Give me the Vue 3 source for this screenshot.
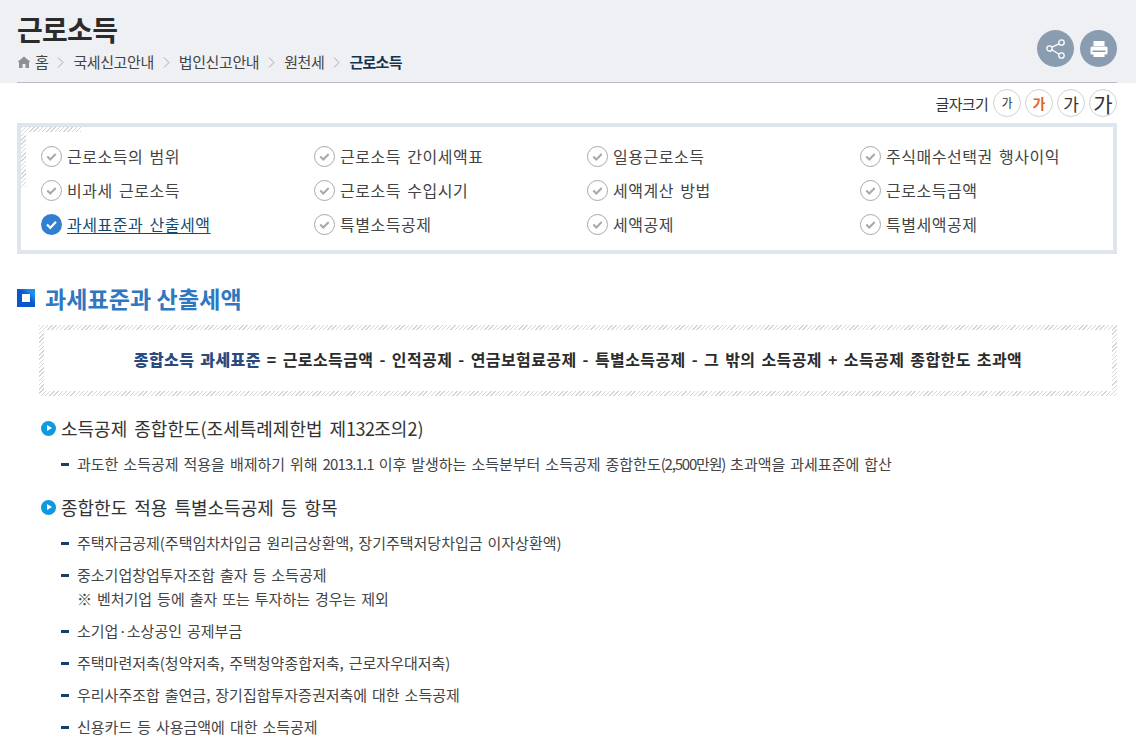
<script setup>
const crumbs = ['국세신고안내', '법인신고안내', '원천세']
const toc = [
  '근로소득의 범위', '근로소득 간이세액표', '일용근로소득', '주식매수선택권 행사이익',
  '비과세 근로소득', '근로소득 수입시기', '세액계산 방법', '근로소득금액',
  '과세표준과 산출세액', '특별소득공제', '세액공제', '특별세액공제'
]
const items = [
  ['주택자금공제(주택임차차입금 원리금상환액, 장기주택저당차입금 이자상환액)'],
  ['중소기업창업투자조합 출자 등 소득공제', '※ 벤처기업 등에 출자 또는 투자하는 경우는 제외'],
  ['소기업·소상공인 공제부금'],
  ['주택마련저축(청약저축, 주택청약종합저축, 근로자우대저축)'],
  ['우리사주조합 출연금, 장기집합투자증권저축에 대한 소득공제'],
  ['신용카드 등 사용금액에 대한 소득공제']
]
</script>

<template>
  <div class="page">
    <header class="head">
      <div class="head-inner">
        <div>
          <h1 class="title">근로소득</h1>
          <nav class="crumbs">
            <svg class="home" width="14" height="12" viewBox="0 0 14 12"><path d="M7 0.5 L13.5 6 L12 6 V12 H8.5 V8 H5.5 V12 H2 V6 L0.5 6 Z" fill="#8a8f98"/></svg>
            <span>홈</span>
            <template v-for="c in crumbs" :key="c">
              <svg class="chev" width="7" height="11" viewBox="0 0 7 11"><path d="M1 0.5 L6 5.5 L1 10.5" fill="none" stroke="#a5a8ae" stroke-width="1"/></svg>
              <span>{{ c }}</span>
            </template>
            <svg class="chev" width="7" height="11" viewBox="0 0 7 11"><path d="M1 0.5 L6 5.5 L1 10.5" fill="none" stroke="#a5a8ae" stroke-width="1"/></svg>
            <strong>근로소득</strong>
          </nav>
        </div>
        <div class="actions">
          <span class="round">
            <svg width="20" height="20" viewBox="0 0 20 20" fill="none" stroke="#fff" stroke-width="1.3"><circle cx="15.5" cy="3.500" r="2.700"/><circle cx="15.5" cy="16.500" r="2.700"/><circle cx="3.500" cy="9.500" r="2.700"/><path d="M5.900 8.200 L13.100 4.800 M5.900 10.800 L13.100 15.200"/></svg>
          </span>
          <span class="round">
            <svg width="18" height="16" viewBox="0 0 18 16"><path fill="#fff" d="M3.500 0h11v5h-11z"/><rect fill="#fff" x="0.500" y="5.500" width="17" height="8" rx="1.500"/><path fill="#8a9db0" d="M2.500 9.500h13v1.500h-13z"/><path fill="#fff" d="M3.500 11h11v5h-11z"/></svg>
          </span>
        </div>
      </div>
    </header>

    <main class="main">
      <div class="sizes">
        <span class="sizes-label">글자크기</span>
        <span class="sz s1">가</span>
        <span class="sz s2">가</span>
        <span class="sz s3">가</span>
        <span class="sz s4">가</span>
      </div>

      <div class="toc">
        <a v-for="(t, i) in toc" :key="t" class="toc-item" :class="{ on: i === 8 }">
          <svg class="chk" width="21" height="21" viewBox="0 0 21 21">
            <template v-if="i === 8">
              <circle cx="10.500" cy="10.500" r="10.500" fill="#2f7fd3"/>
              <path d="M6 10.500 L9.300 13.800 L15 7.800" fill="none" stroke="#fff" stroke-width="2.200"/>
            </template>
            <template v-else>
              <circle cx="10.500" cy="10.500" r="10" fill="#fff" stroke="#a8a8a8" stroke-width="1"/>
              <path d="M6.300 10.500 L9.300 13.500 L14.700 8" fill="none" stroke="#a8a8a8" stroke-width="2"/>
            </template>
          </svg>
          <span class="toc-text">{{ t }}</span>
        </a>
      </div>

      <h2 class="sec"><i class="sec-mark"></i>과세표준과 산출세액</h2>

      <div class="formula">
        <p><b class="navy">종합소득 과세표준</b> = 근로소득금액 - 인적공제 - 연금보험료공제 - 특별소득공제 - 그 밖의 소득공제 + 소득공제 종합한도 초과액</p>
      </div>

      <h3 class="sub first"><i class="play"></i><span>소득공제 종합한도(조세특례제한법 제<span class="num-s">132</span>조의2)</span></h3>
      <ul class="list l1">
        <li><i class="dash"></i><div>과도한 소득공제 적용을 배제하기 위해 <span class="num-a">2013.1.1</span> 이후 발생하는 소득분부터 소득공제 종합한도<span class="num-b">(2,500만원)</span> 초과액을 과세표준에 합산</div></li>
      </ul>

      <h3 class="sub second"><i class="play"></i>종합한도 적용 특별소득공제 등 항목</h3>
      <ul class="list l2">
        <li v-for="it in items" :key="it[0]"><i class="dash"></i><div><div v-for="l in it" :key="l">{{ l }}</div></div></li>
      </ul>
    </main>
  </div>
</template>

<style>
html, body { margin: 0; background: #fff; overflow: hidden; }
</style>

<style scoped>
.page {
  width: 1136px;
  height: 738px;
  overflow: hidden;
  font-family: "Noto Sans CJK KR", "Noto Sans", sans-serif;
  color: #333;
}
.head { background: #eff0f4; height: 83px; box-sizing: border-box; padding: 0 19px 0 17px; }
.head-inner {
  height: 83px;
  box-sizing: border-box;
  border-bottom: 1px solid #b9bbc3;
  display: flex;
  justify-content: space-between;
}
.title {
  margin: 0;
  padding-top: 10px;
  font-size: 28px;
  line-height: 38px;
  font-weight: 700;
  letter-spacing: -0.7px;
  color: #2b2b2b;
}
.crumbs {
  margin-top: 3px;
  display: flex;
  align-items: center;
  font-size: 15px;
  line-height: 22px;
  letter-spacing: -0.4px;
  color: #444;
}
.home { margin-right: 4px; }
.chev { margin: 0 9px; }
.crumbs strong { font-weight: 700; color: #12344f; letter-spacing: -0.7px; }
.actions { display: flex; gap: 6px; padding-top: 30px; }
.round {
  width: 37px;
  height: 37px;
  border-radius: 50%;
  background: #8a9db0;
  display: flex;
  align-items: center;
  justify-content: center;
}
.main { padding: 0 19px 0 17px; }
.sizes {
  height: 40px;
  display: flex;
  justify-content: flex-end;
  align-items: center;
  gap: 4px;
  box-sizing: border-box;
}
.sizes-label { font-size: 15px; letter-spacing: -0.7px; margin-right: 1px; color: #333; }
.sz {
  width: 28px;
  height: 28px;
  box-sizing: border-box;
  border: 1px solid #d2d2d2;
  border-radius: 50%;
  background: #fff;
  display: flex;
  align-items: center;
  justify-content: center;
  line-height: 1;
}
.s1 { font-size: 12px; }
.s2 { font-size: 14px; font-weight: 700; color: #e2661d; }
.s3 { font-size: 17px; }
.s4 { font-size: 21px; }
.toc {
  height: 131px;
  box-sizing: border-box;
  border: 4px solid #dfe5ec;
  padding: 12px 0 0 20px;
  display: grid;
  grid-template-columns: repeat(4, 273px);
  grid-auto-rows: 34px;
  background-color: #fff;
  background-image:
    repeating-linear-gradient(135deg, #d6d6d6 0 1px, #fff 1px 3px),
    repeating-linear-gradient(135deg, #d6d6d6 0 1px, #fff 1px 3px);
  background-size: 60px 5px, 5px 60px;
  background-position: 0 0, 0 0;
  background-repeat: no-repeat;
  background-origin: padding-box;
}
.toc-item {
  display: flex;
  align-items: center;
  gap: 5px;
  font-size: 16px;
  letter-spacing: 0.55px;
  word-spacing: 2px;
  color: #444;
  height: 34px;
}
.toc-item.on .toc-text { color: #0f4c75; text-decoration: underline; text-underline-offset: 2px; }
.sec {
  margin: 27px 0 0;
  height: 34px;
  display: flex;
  align-items: center;
  gap: 10px;
  font-size: 23px;
  font-weight: 700;
  letter-spacing: 0.1px;
  color: #2f77c0;
}
.sec-mark {
  width: 18px;
  height: 18px;
  background:
    linear-gradient(#fff, #fff) center / 8px 8px no-repeat,
    linear-gradient(45deg, #0a56cc 55%, #1e90e8 80%);
  display: block;
}
.formula {
  margin: 10px 0 0 22px;
  height: 71px;
  box-sizing: border-box;
  padding: 5px;
  background: repeating-linear-gradient(135deg, #d6d6d6 0 1px, #fff 1px 3px);
}
.formula p {
  margin: 0;
  height: 61px;
  background: #fff;
  text-align: center;
  font-size: 16px;
  font-weight: 700;
  line-height: 58px;
  letter-spacing: 0.4px;
  word-spacing: 2px;
  color: #2b2b2b;
}
.navy { color: #2b4a7e; }
.sub {
  margin: 0 0 0 24px;
  height: 30px;
  display: flex;
  align-items: center;
  gap: 5px;
  font-size: 18px;
  font-weight: 400;
  word-spacing: 3px;
  color: #333;
}
.sub.first { margin-top: 17px; }
.sub.second { margin-top: 12px; }
.num-s { letter-spacing: -0.6px; }
.num-a { letter-spacing: -0.9px; }
.num-b { letter-spacing: -1.2px; }
.play {
  width: 15px;
  height: 15px;
  border-radius: 50%;
  background: #0f9ae0;
  position: relative;
  display: block;
}
.play::after {
  content: "";
  position: absolute;
  left: 6px;
  top: 4px;
  border-left: 5px solid #fff;
  border-top: 3.500px solid transparent;
  border-bottom: 3.500px solid transparent;
}
.list { list-style: none; margin: 5px 0 0 44px; padding: 0; }
.list li {
  display: flex;
  gap: 8px;
  font-size: 15px;
  line-height: 24px;
  word-spacing: 1.6px;
  color: #444;
  padding: 4px 0;
}
.dash { width: 8px; height: 3px; background: #12406a; margin-top: 11px; flex: none; display: block; }
</style>
